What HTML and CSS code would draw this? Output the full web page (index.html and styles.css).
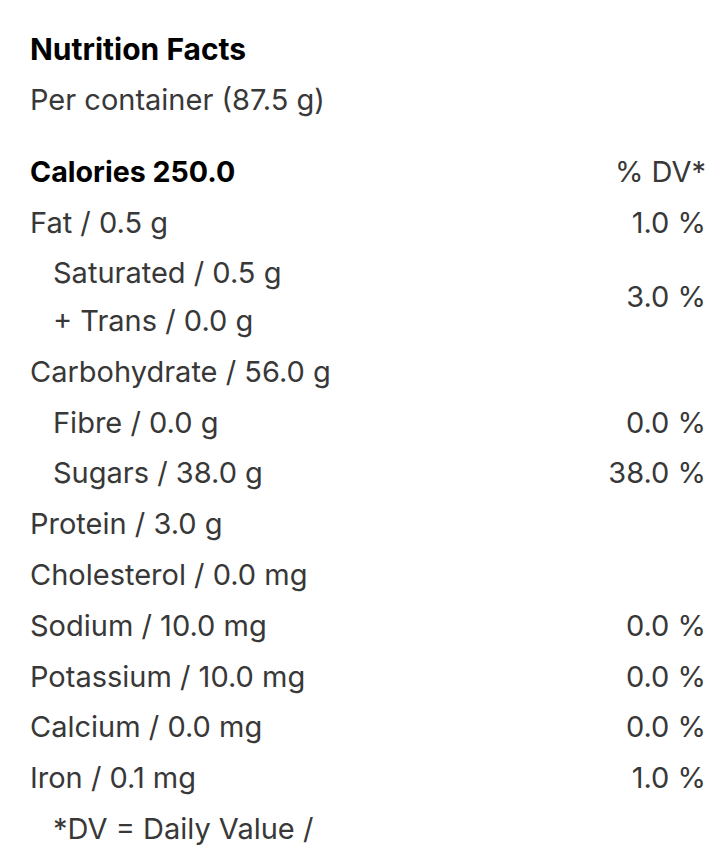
FILE: index.html
```html
<!DOCTYPE html>
<html>
<head>
<meta charset="utf-8">
<link rel="stylesheet" href="styles.css">
</head>
<body>
<div class="panel">
  <h1 class="title">Nutrition Facts</h1>
  <div class="serving">Per container (87.5 g)</div>
  <div class="table">
    <div class="row head"><span class="cal">Calories 250.0</span><span class="dv">% DV*</span></div>
    <div class="row"><span>Fat / 0.5 g</span><span class="dv">1.0 %</span></div>
    <div class="row group">
      <div class="stack">
        <span class="sub">Saturated / 0.5 g</span>
        <span class="sub">+ Trans / 0.0 g</span>
      </div>
      <span class="dv">3.0 %</span>
    </div>
    <div class="row"><span>Carbohydrate / 56.0 g</span><span class="dv"></span></div>
    <div class="row"><span class="sub">Fibre / 0.0 g</span><span class="dv">0.0 %</span></div>
    <div class="row"><span class="sub">Sugars / 38.0 g</span><span class="dv">38.0 %</span></div>
    <div class="row"><span>Protein / 3.0 g</span><span class="dv"></span></div>
    <div class="row"><span>Cholesterol / 0.0 mg</span><span class="dv"></span></div>
    <div class="row"><span>Sodium / 10.0 mg</span><span class="dv">0.0 %</span></div>
    <div class="row"><span>Potassium / 10.0 mg</span><span class="dv">0.0 %</span></div>
    <div class="row"><span>Calcium / 0.0 mg</span><span class="dv">0.0 %</span></div>
    <div class="row"><span>Iron / 0.1 mg</span><span class="dv">1.0 %</span></div>
    <div class="row"><span class="sub">*DV = Daily Value /</span></div>
  </div>
</div>
</body>
</html>
```

FILE: styles.css
```css
html, body {
  margin: 0;
  padding: 0;
  background: #fff;
}
body {
  font-family: Inter, "Liberation Sans", sans-serif;
  color: #383838;
  font-size: 29px;
}
.panel {
  padding: 27px 17px 0 30px;
}
.title {
  margin: 0;
  font-size: 30px;
  font-weight: 700;
  color: #000;
  line-height: 44px;
}
.serving {
  line-height: 58px;
  margin-bottom: 17.6px;
}
.table {
  display: flex;
  flex-direction: column;
}
.row {
  display: flex;
  justify-content: space-between;
  align-items: center;
  line-height: 48px;
  padding: 1.4px 0;
}
.row.group {
  padding: 1.2px 0;
}
.head {
  color: #000;
}
.cal {
  font-weight: 700;
  font-size: 28.6px;
}
.head .dv {
  color: #383838;
}
.stack {
  display: flex;
  flex-direction: column;
}
.sub {
  padding-left: 23px;
}
```
